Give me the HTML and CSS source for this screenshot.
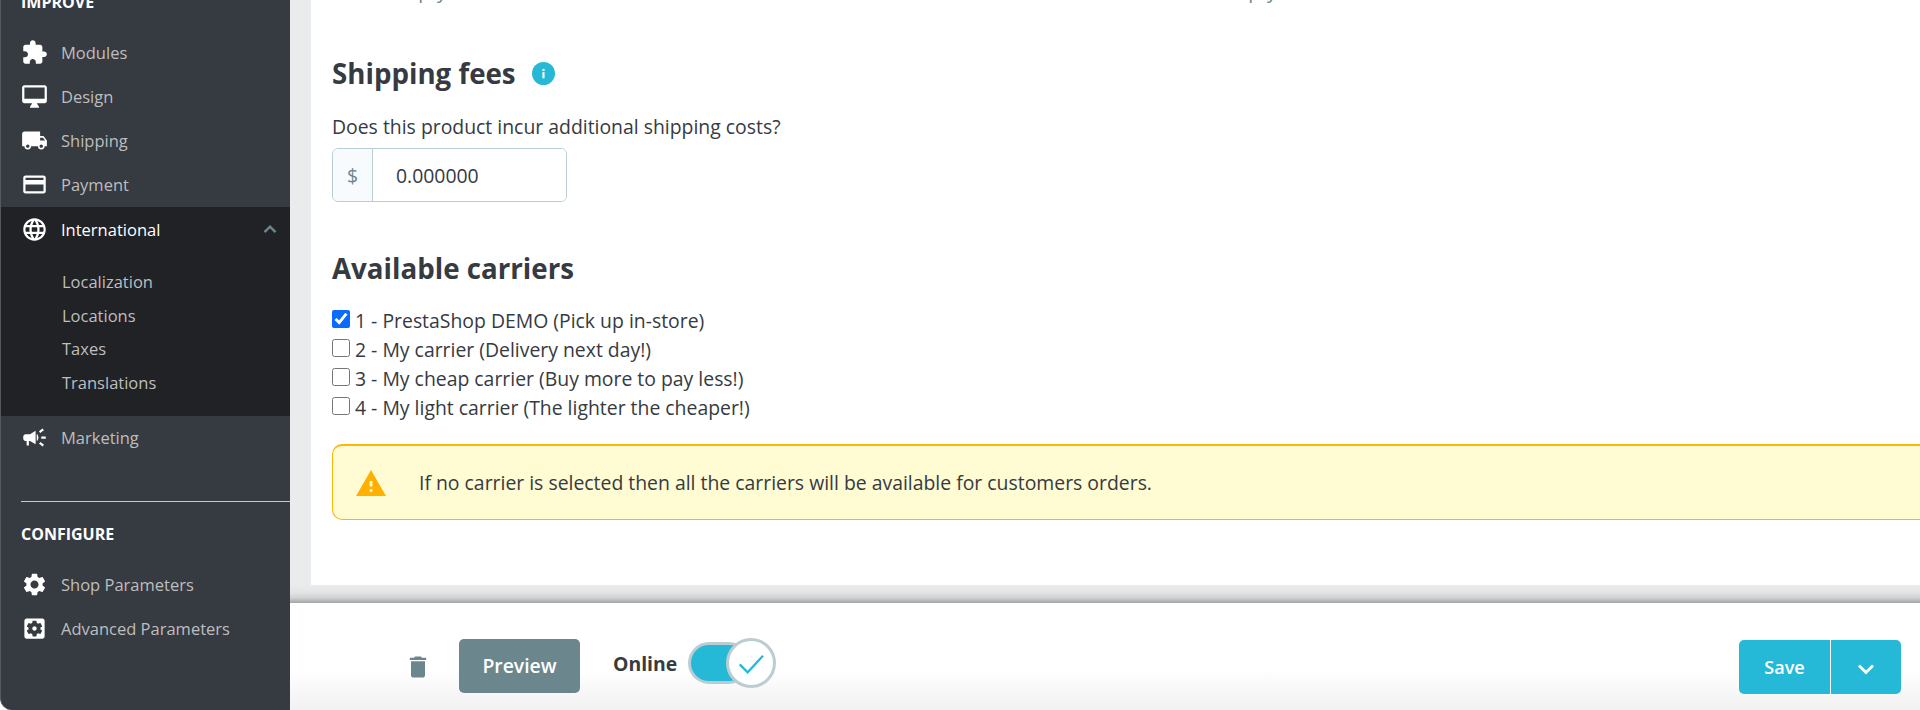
FILE: index.html
```html
<!DOCTYPE html>
<html lang="en">
<head>
    <meta charset="UTF-8">
    <title>Product shipping</title>
    <link rel="stylesheet" href="styles.css">
</head>
<body>

<div class="page">
    <nav class="sidebar">
        <div class="nav-title nav-title-first">Improve</div>
        <a class="nav-item"><svg class="nav-icon" viewBox="0 0 24 24"><path d="M20.5 11H19V7c0-1.1-.9-2-2-2h-4V3.5C13 2.12 11.88 1 10.5 1S8 2.12 8 3.5V5H4c-1.1 0-1.99.9-1.99 2v3.8H3.5c1.49 0 2.7 1.21 2.7 2.7s-1.21 2.7-2.7 2.7H2V20c0 1.1.9 2 2 2h3.8v-1.5c0-1.49 1.21-2.7 2.7-2.7 1.49 0 2.7 1.21 2.7 2.7V22H17c1.1 0 2-.9 2-2v-4h1.5c1.38 0 2.5-1.12 2.5-2.5S21.88 11 20.5 11z"/></svg>Modules</a>
        <a class="nav-item"><svg class="nav-icon" viewBox="0 0 24 24"><path d="M21 2H3c-1.1 0-2 .9-2 2v12c0 1.1.9 2 2 2h7l-2 3v1h8v-1l-2-3h7c1.1 0 2-.9 2-2V4c0-1.1-.9-2-2-2zm0 12H3V4h18v10z"/></svg>Design</a>
        <a class="nav-item"><svg class="nav-icon" viewBox="0 0 24 24"><path d="M20 8h-3V4H3c-1.1 0-2 .9-2 2v11h2c0 1.66 1.34 3 3 3s3-1.34 3-3h6c0 1.66 1.34 3 3 3s3-1.34 3-3h2v-5l-3-4zM6 18.5c-.83 0-1.5-.67-1.5-1.5s.67-1.5 1.5-1.5 1.5.67 1.5 1.5-.67 1.5-1.5 1.5zm13.5-9l1.96 2.5H17V9.5h2.5zm-1.5 9c-.83 0-1.5-.67-1.5-1.5s.67-1.5 1.5-1.5 1.5.67 1.5 1.5-.67 1.5-1.5 1.5z"/></svg>Shipping</a>
        <a class="nav-item"><svg class="nav-icon" viewBox="0 0 24 24"><path d="M20 4H4c-1.11 0-1.99.89-1.99 2L2 18c0 1.11.89 2 2 2h16c1.11 0 2-.89 2-2V6c0-1.11-.89-2-2-2zm0 14H4v-6h16v6zm0-10H4V6h16v2z"/></svg>Payment</a>
        <div class="nav-group">
            <a class="nav-item nav-item-active"><svg class="nav-icon" viewBox="0 0 24 24"><path d="M11.99 2C6.47 2 2 6.48 2 12s4.47 10 9.99 10C17.52 22 22 17.52 22 12S17.52 2 11.99 2zm6.93 6h-2.95c-.32-1.25-.78-2.45-1.38-3.56 1.84.63 3.37 1.91 4.33 3.56zM12 4.04c.83 1.2 1.48 2.53 1.91 3.96h-3.82c.43-1.43 1.08-2.76 1.91-3.96zM4.26 14C4.1 13.36 4 12.69 4 12s.1-1.36.26-2h3.38c-.08.66-.14 1.32-.14 2 0 .68.06 1.34.14 2H4.26zm.82 2h2.95c.32 1.25.78 2.45 1.38 3.56-1.84-.63-3.37-1.9-4.33-3.56zm2.95-8H5.08c.96-1.66 2.49-2.93 4.33-3.56C8.81 5.55 8.35 6.75 8.03 8zM12 19.96c-.83-1.2-1.48-2.53-1.91-3.96h3.82c-.43 1.43-1.08 2.76-1.91 3.96zM14.34 14H9.66c-.09-.66-.16-1.32-.16-2 0-.68.07-1.35.16-2h4.68c.09.65.16 1.32.16 2 0 .68-.07 1.34-.16 2zm.25 5.56c.6-1.11 1.06-2.31 1.38-3.56h2.95c-.96 1.65-2.49 2.93-4.33 3.56zM16.36 14c.08-.66.14-1.32.14-2 0-.68-.06-1.34-.14-2h3.38c.16.64.26 1.31.26 2s-.1 1.36-.26 2h-3.38z"/></svg>International<svg class="nav-chevron" viewBox="0 0 24 24"><path d="M6 15.5l6-6 6 6" fill="none" stroke="currentColor" stroke-width="2.6"/></svg></a>
            <div class="subnav">
                <a class="subnav-item">Localization</a>
                <a class="subnav-item">Locations</a>
                <a class="subnav-item">Taxes</a>
                <a class="subnav-item">Translations</a>
            </div>
        </div>
        <a class="nav-item"><svg class="nav-icon" viewBox="0 0 24 24"><path d="M18 11v2h4v-2h-4zm-2 6.61c.96.71 2.21 1.65 3.2 2.39.4-.53.8-1.07 1.2-1.6-.99-.74-2.24-1.68-3.2-2.4-.4.54-.8 1.08-1.2 1.61zM20.4 5.6c-.4-.53-.8-1.07-1.2-1.6-.99.74-2.24 1.68-3.2 2.4.4.53.8 1.07 1.2 1.6.96-.72 2.21-1.65 3.2-2.4zM4 9c-1.1 0-2 .9-2 2v2c0 1.1.9 2 2 2h1v4h2v-4h1l5 3V6L8 9H4zm11.5 3c0-1.33-.58-2.53-1.5-3.35v6.69c.92-.81 1.5-2.01 1.5-3.34z"/></svg>Marketing</a>
        <div class="nav-divider"></div>
        <div class="nav-title">Configure</div>
        <a class="nav-item"><svg class="nav-icon" viewBox="0 0 24 24"><path d="M19.14 12.94c.04-.3.06-.61.06-.94 0-.32-.02-.64-.07-.94l2.03-1.58c.18-.14.23-.41.12-.61l-1.92-3.32c-.12-.22-.37-.29-.59-.22l-2.39.96c-.5-.38-1.03-.7-1.62-.94l-.36-2.54c-.04-.24-.24-.41-.48-.41h-3.84c-.24 0-.43.17-.47.41l-.36 2.54c-.59.24-1.13.57-1.62.94l-2.39-.96c-.22-.08-.47 0-.59.22L2.74 8.87c-.12.21-.08.47.12.61l2.03 1.58c-.05.3-.09.63-.09.94s.02.64.07.94l-2.03 1.58c-.18.14-.23.41-.12.61l1.92 3.32c.12.22.37.29.59.22l2.39-.96c.5.38 1.03.7 1.62.94l.36 2.54c.05.24.24.41.48.41h3.84c.24 0 .44-.17.47-.41l.36-2.54c.59-.24 1.13-.56 1.62-.94l2.39.96c.22.08.47 0 .59-.22l1.92-3.32c.12-.22.07-.47-.12-.61l-2.01-1.58zM12 15.6c-1.98 0-3.6-1.62-3.6-3.6s1.62-3.6 3.6-3.6 3.6 1.62 3.6 3.6-1.62 3.6-3.6 3.6z"/></svg>Shop Parameters</a>
        <a class="nav-item"><svg class="nav-icon" viewBox="0 0 24 24"><path d="M12 10c-1.1 0-2 .9-2 2s.9 2 2 2 2-.9 2-2-.9-2-2-2zm7-7H5c-1.11 0-2 .9-2 2v14c0 1.1.89 2 2 2h14c1.11 0 2-.9 2-2V5c0-1.1-.89-2-2-2zm-1.75 9c0 .23-.02.46-.05.68l1.48 1.16c.13.11.17.3.08.45l-1.4 2.42c-.09.15-.27.21-.43.15l-1.74-.7c-.36.28-.76.51-1.18.69l-.26 1.85c-.03.17-.18.3-.35.3h-2.8c-.17 0-.32-.13-.35-.29l-.26-1.85c-.43-.18-.82-.41-1.18-.69l-1.74.7c-.16.06-.34 0-.43-.15l-1.4-2.42c-.09-.15-.05-.34.08-.45l1.48-1.16c-.03-.23-.05-.46-.05-.69 0-.23.02-.46.05-.68l-1.48-1.16c-.13-.11-.17-.3-.08-.45l1.4-2.42c.09-.15.27-.21.43-.15l1.74.7c.36-.28.76-.51 1.18-.69l.26-1.85c.03-.17.18-.3.35-.3h2.8c.17 0 .32.13.35.29l.26 1.85c.43.18.82.41 1.18.69l1.74-.7c.16-.06.34 0 .43.15l1.4 2.42c.09.15.05.34-.08.45l-1.48 1.16c.03.23.05.46.05.69z"/></svg>Advanced Parameters</a>
    </nav>

    <div class="main">
        <div class="content">
            <div class="card">
                <div class="hint-row">
                    <p class="hint">Leave empty to disable.</p>
                    <p class="hint">Leave empty to disable.</p>
                </div>

                <h2 class="section-title">Shipping fees
                    <svg class="info-icon" viewBox="0 0 24 24"><circle cx="12" cy="12" r="12" fill="#25b9d7"/><rect x="10.9" y="10.6" width="2.2" height="6.4" fill="#fff"/><rect x="10.9" y="7.2" width="2.2" height="2.2" fill="#fff"/></svg>
                </h2>
                <label class="field-label" for="fees">Does this product incur additional shipping costs?</label>
                <div class="input-group">
                    <span class="input-prefix">$</span>
                    <input class="input-value" id="fees" type="text" value="0.000000">
                </div>

                <h2 class="section-title section-carriers">Available carriers</h2>
                <div class="carriers">
                    <label class="carrier"><input type="checkbox" checked>1 - PrestaShop DEMO (Pick up in-store)</label>
                    <label class="carrier"><input type="checkbox">2 - My carrier (Delivery next day!)</label>
                    <label class="carrier"><input type="checkbox">3 - My cheap carrier (Buy more to pay less!)</label>
                    <label class="carrier"><input type="checkbox">4 - My light carrier (The lighter the cheaper!)</label>
                </div>

                <div class="alert">
                    <svg class="alert-icon" viewBox="1 2 22 19"><path d="M1 21h22L12 2 1 21zm12-3h-2v-2h2v2zm0-4h-2v-4h2v4z"/></svg>
                    If no carrier is selected then all the carriers will be available for customers orders.
                </div>
            </div>
        </div>

        <div class="footer">
            <svg class="delete-icon" viewBox="0 0 24 24"><path d="M6 19c0 1.1.9 2 2 2h8c1.1 0 2-.9 2-2V7H6v12zM19 4h-3.5l-1-1h-5l-1 1H5v2h14V4z"/></svg>
            <button class="btn btn-preview">Preview</button>
            <span class="online-label">Online</span>
            <div class="switch">
                <div class="switch-track"></div>
                <div class="switch-knob"><svg viewBox="0 0 24 24"><path d="M3.5 13l6 6L21 6.5" fill="none" stroke="#25b9d7" stroke-width="1.7"/></svg></div>
            </div>
            <div class="save-group">
                <button class="btn btn-save">Save</button>
                <button class="btn btn-save-more"><svg viewBox="0 0 24 24"><path d="M5 8.5l7 7 7-7" fill="none" stroke="#fff" stroke-width="2.8"/></svg></button>
            </div>
        </div>
    </div>
</div>

</body>
</html>
```

FILE: styles.css
```css
* {
    box-sizing: border-box;
}
html, body {
    margin: 0;
    height: 100%;
    overflow: hidden;
    background: #fff;
}
body {
    font-family: "Open Sans", sans-serif;
    color: #363a41;
}
.page {
    display: flex;
    height: 710px;
}

/* sidebar */
.sidebar {
    width: 290px;
    flex: none;
    height: 710px;
    overflow: hidden;
    background: #363a41;
    border-left: 1px solid #565a60;
    border-bottom-left-radius: 12px;
    font-size: 16.5px;
}
.nav-title {
    height: 24px;
    margin: 20px 0 17px 20px;
    line-height: 24px;
    font-size: 16px;
    font-weight: 700;
    color: #fff;
    text-transform: uppercase;
}
.nav-title-first {
    margin-top: -10px;
    margin-bottom: 16px;
}
.nav-item {
    display: flex;
    align-items: center;
    height: 44px;
    padding-left: 20px;
    color: #bebebe;
}
.nav-icon {
    width: 27px;
    height: 27px;
    margin-right: 13px;
    fill: #fff;
    flex: none;
}
.nav-group {
    margin-top: 1px;
    background: #202226;
}
.nav-item-active {
    color: #fff;
}
.nav-chevron {
    width: 22px;
    height: 22px;
    margin-left: auto;
    margin-right: 9px;
    color: #6c868e;
}
.subnav {
    padding: 14px 0 16px 61px;
}
.subnav-item {
    display: block;
    height: 33.7px;
    line-height: 33.7px;
    color: #bebebe;
}
.nav-divider {
    height: 1px;
    margin: 41px 0 0 20px;
    background: #bbcdd2;
}

/* main area */
.main {
    flex: 1;
    min-width: 0;
    display: flex;
    flex-direction: column;
    overflow: hidden;
}
.content {
    height: 603px;
    flex: none;
    overflow: hidden;
    padding-left: 21px;
    background: linear-gradient(to bottom, #e9ebed 585px, #e4e5e7 592px, #d0d1d3 598px, #a3a3a3 603px);
}
.card {
    width: 1800px;
    height: 585px;
    overflow: hidden;
    padding-left: 21px;
    background: #fff;
}
.hint-row {
    display: grid;
    grid-template-columns: 830px 1fr;
    margin-top: -23px;
    height: 27px;
}
.hint {
    margin: 0;
    line-height: 27px;
    font-size: 19.4px;
    color: #6c868e;
}
.section-title {
    display: flex;
    align-items: center;
    margin: 49px 0 0;
    height: 40px;
    font-size: 27.7px;
    font-weight: 700;
    color: #363a41;
}
.info-icon {
    width: 23px;
    height: 23px;
    margin-left: 16px;
}
.field-label {
    display: block;
    margin-top: 20px;
    line-height: 27px;
    font-size: 19.4px;
}
.input-group {
    display: flex;
    width: 235px;
    height: 54px;
    margin-top: 8px;
    border: 1px solid #bbcdd2;
    border-radius: 6px;
    overflow: hidden;
}
.input-prefix {
    width: 40px;
    flex: none;
    display: flex;
    align-items: center;
    justify-content: center;
    font-size: 19.4px;
    color: #6c868e;
    background: #f8fbfd;
    border-right: 1px solid #bbcdd2;
}
.input-value {
    flex: 1;
    min-width: 0;
    border: none;
    outline: none;
    padding: 0 0 0 23px;
    font-family: inherit;
    font-size: 19.4px;
    color: #363a41;
}
.section-title.section-carriers {
    margin-top: 46px;
}
.carriers {
    margin-top: 18px;
}
.carrier {
    display: flex;
    align-items: center;
    height: 29px;
    font-size: 19.4px;
}
.carrier input {
    width: 18px;
    height: 18px;
    margin: -3px 5px 0 0;
    accent-color: #0a6cff;
}
.alert {
    display: flex;
    align-items: center;
    width: 1700px;
    height: 76px;
    margin-top: 22px;
    padding-left: 23px;
    font-size: 19.4px;
    background: #fffbd3;
    border: 1px solid #ffb60a;
    border-top-width: 2px;
    border-radius: 10px;
}
.alert-icon {
    width: 30px;
    height: 26px;
    margin-right: 33px;
    fill: #ffb000;
}

/* footer bar */
.footer {
    height: 107px;
    flex: none;
    display: flex;
    align-items: center;
    padding: 20px 19px 0 114px;
    background: linear-gradient(to bottom, #fff 62%, #f1f1f1 100%);
}
.delete-icon {
    width: 28px;
    height: 28px;
    fill: #6c868e;
    margin-right: 27px;
}
.btn {
    border: none;
    font-family: inherit;
    font-size: 18px;
    font-weight: 600;
    color: #fff;
    padding: 0;
}
.btn-preview {
    width: 121px;
    height: 54px;
    margin-top: -2px;
    font-size: 19.4px;
    background: #6c868e;
    border-radius: 5px;
}
.online-label {
    margin: -6px 11px 0 33px;
    font-size: 19.4px;
    font-weight: 700;
}
.switch {
    position: relative;
    width: 88px;
    height: 50px;
    margin-top: -8px;
}
.switch-track {
    width: 62px;
    height: 42px;
    margin-top: 4px;
    background: #25b9d7;
    border: 3px solid #bbcdd2;
    border-radius: 21px;
}
.switch-knob {
    position: absolute;
    right: 0;
    top: 0;
    width: 50px;
    height: 50px;
    padding: 6px;
    background: #fff;
    border: 3px solid #bbcdd2;
    border-radius: 50%;
}
.switch-knob svg {
    display: block;
    width: 32px;
    height: 32px;
}
.save-group {
    display: flex;
    margin-left: auto;
    height: 54px;
}
.btn-save {
    width: 91px;
    background: #25b9d7;
    border-radius: 5px 0 0 5px;
}
.btn-save-more {
    width: 70px;
    margin-left: 1px;
    background: #25b9d7;
    border-radius: 0 5px 5px 0;
    display: flex;
    align-items: center;
    justify-content: center;
}
.btn-save-more svg {
    width: 24px;
    height: 24px;
    margin-top: 4px;
}
```
